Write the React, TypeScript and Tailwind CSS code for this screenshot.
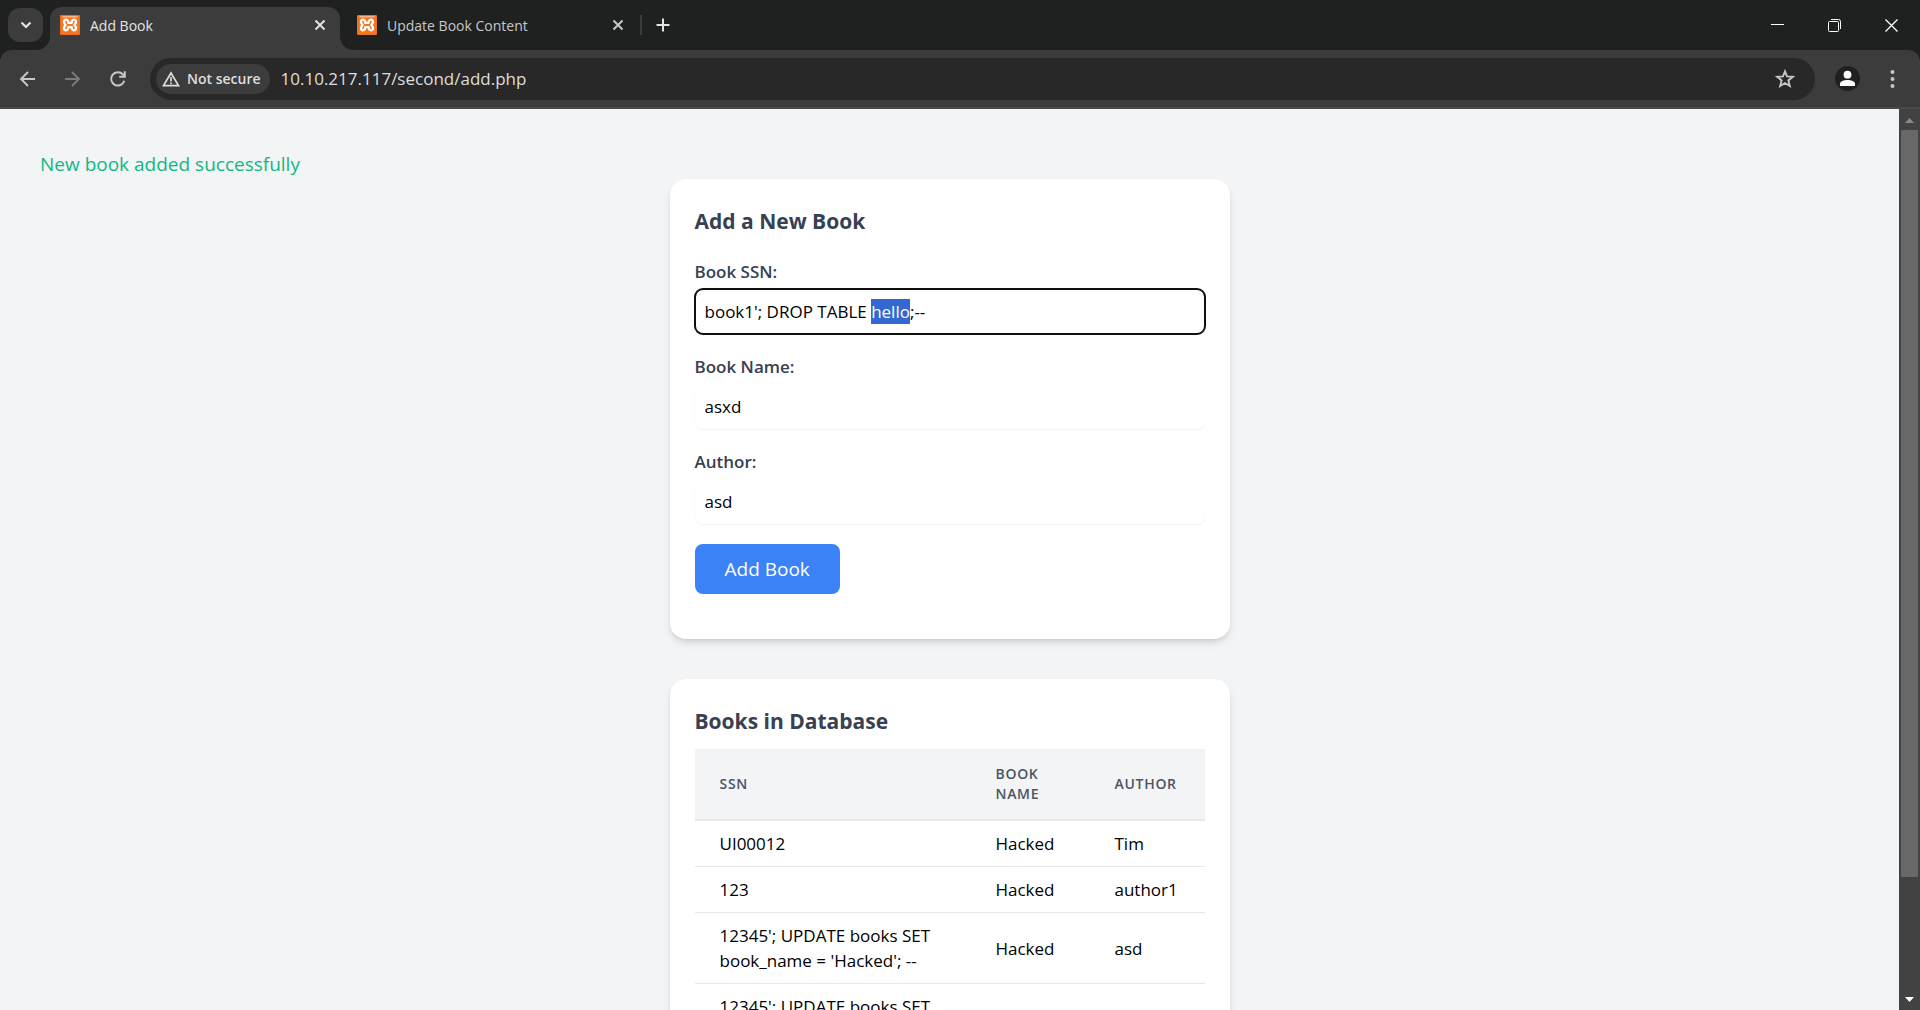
import { useEffect, useRef } from "react";
import type { ReactNode } from "react";

const books = [
  { ssn: "UI00012", name: "Hacked", author: "Tim" },
  { ssn: "123", name: "Hacked", author: "author1" },
  { ssn: "12345'; UPDATE books SET book_name = 'Hacked'; --", name: "Hacked", author: "asd" },
  { ssn: "12345'; UPDATE books SET book_name = 'Hacked'; --", name: "Hacked", author: "asd" },
];

function Favicon() {
  return (
    <svg viewBox="0 0 20 20" className="size-5 shrink-0" aria-hidden="true">
      <rect width="20" height="20" rx="1" fill="#e9651c" />
      <rect x="0.5" y="0.5" width="19" height="19" rx="1" fill="#f37623" />
      <path d="M2 1h16l-1 1.600H3z" fill="#f9b384" />
      <path
        d="M8.300 7.900C8.300 3.700 4 3.900 4 6.800C4 8.400 5 9 5.600 10C5 11 4 11.600 4 13.200C4 16.100 8.300 16.300 8.300 12.100H11.700C11.700 16.300 16 16.100 16 13.200C16 11.600 15 11 14.400 10C15 9 16 8.400 16 6.800C16 3.900 11.700 3.700 11.700 7.900Z"
        fill="none"
        stroke="#fff"
        strokeWidth="2.300"
        strokeLinejoin="round"
      />
    </svg>
  );
}

function CloseIcon() {
  return (
    <svg viewBox="0 0 12 12" className="size-3" fill="none" stroke="currentColor" strokeWidth="2" aria-hidden="true">
      <path d="M1.500 1.500l9 9M10.500 1.500l-9 9" />
    </svg>
  );
}

function TabStrip() {
  return (
    <header className="flex h-[50px] shrink-0 items-center bg-[#1f2120] text-[#e3e3e3]">
      <button aria-label="Search tabs" className="ml-2 grid h-[34px] w-[35px] place-items-center rounded-xl bg-[#3c3c3c]">
        <svg viewBox="0 0 12 8" className="h-2 w-3" fill="none" stroke="currentColor" strokeWidth="2.200" aria-hidden="true">
          <path d="M1.500 1.500L6 6l4.500-4.500" />
        </svg>
      </button>
      <div className="relative ml-[7px] mt-[7px] flex h-[43px] w-[290px] items-center rounded-t-xl bg-[#3c3c3c] pb-[7px] pl-[10px] pr-[14px]">
        <svg viewBox="0 0 14 14" className="absolute -left-[14px] bottom-0 size-[14px]" aria-hidden="true">
          <path d="M14 0v14H0C8 14 14 8 14 0z" fill="#3c3c3c" />
        </svg>
        <svg viewBox="0 0 14 14" className="absolute -right-[14px] bottom-0 size-[14px]" aria-hidden="true">
          <path d="M0 0v14h14C6 14 0 8 0 0z" fill="#3c3c3c" />
        </svg>
        <Favicon />
        <span className="ml-[10px] flex-1 text-[14px]">Add Book</span>
        <button aria-label="Close Add Book">
          <CloseIcon />
        </button>
      </div>
      <div className="ml-[17px] flex w-[267px] items-center text-[#c7c7c7]">
        <Favicon />
        <span className="ml-[10px] flex-1 text-[14px]">Update Book Content</span>
        <button aria-label="Close Update Book Content">
          <CloseIcon />
        </button>
      </div>
      <div className="ml-4 h-5 w-0.5 bg-[#3c3c3c]" />
      <button aria-label="New tab" className="ml-[14px]">
        <svg viewBox="0 0 14 14" className="size-[14px]" fill="none" stroke="currentColor" strokeWidth="2" aria-hidden="true">
          <path d="M7 .5v13M.5 7h13" />
        </svg>
      </button>
      <div className="ml-auto flex items-center gap-11 pr-[22px] text-white">
        <button aria-label="Minimize">
          <svg viewBox="0 0 13 13" className="size-[13px]" stroke="currentColor" aria-hidden="true">
            <path d="M0 5.500h13" />
          </svg>
        </button>
        <button aria-label="Restore">
          <svg viewBox="0 0 13 13" className="size-[13px]" fill="none" stroke="currentColor" aria-hidden="true">
            <rect x=".5" y="2.500" width="10" height="10" rx="1" />
            <path d="M3 .5h7.500a2 2 0 0 1 2 2V10" />
          </svg>
        </button>
        <button aria-label="Close window">
          <svg viewBox="0 0 13 13" className="size-[13px]" stroke="currentColor" strokeWidth="1.300" aria-hidden="true">
            <path d="M.5.5l12 12M12.500.5l-12 12" />
          </svg>
        </button>
      </div>
    </header>
  );
}

function Toolbar() {
  return (
    <div className="shrink-0 bg-[#1f2120]">
      <nav className="flex h-[59px] items-center rounded-t-xl border-b-2 border-[#484848] bg-[#3c3c3c] text-[#c7c7c7]">
        <button aria-label="Back" className="ml-[19px]">
          <svg viewBox="0 0 18 18" className="size-[18px]" fill="none" stroke="currentColor" strokeWidth="1.900" aria-hidden="true">
            <path d="M16 9H2.500M9 2L2 9l7 7" />
          </svg>
        </button>
        <button aria-label="Forward" className="ml-[27px] text-[#7a7a7a]">
          <svg viewBox="0 0 18 18" className="size-[18px]" fill="none" stroke="currentColor" strokeWidth="1.900" aria-hidden="true">
            <path d="M1 9h13.500M8 2l7 7-7 7" />
          </svg>
        </button>
        <button aria-label="Reload" className="ml-[27px]">
          <svg viewBox="0 0 18 18" className="size-[18px]" fill="none" stroke="currentColor" strokeWidth="2" aria-hidden="true">
            <path d="M15.300 10.800A6.700 6.700 0 1 1 13.800 4.300L15.500 6M15.800 1.200V6.700H10.200" />
          </svg>
        </button>
        <div className="ml-[23px] flex h-[42px] flex-1 items-center rounded-full bg-[#282828] pl-1.5 pr-5">
          <button className="flex h-[30px] items-center gap-[7px] rounded-full bg-[#3c3c3c] pl-1.5 pr-[9px] text-[14px] font-semibold text-[#dedede]">
            <svg viewBox="0 0 18 16" className="h-4 w-[18px]" fill="none" stroke="currentColor" strokeWidth="1.700" aria-hidden="true">
              <path d="M9 2L1.500 14.600h15z" />
              <path d="M9 6v4.500M9 11.500v1.800" />
            </svg>
            Not secure
          </button>
          <input
            aria-label="Address"
            defaultValue="10.10.217.117/second/add.php"
            className="ml-[11px] min-w-0 flex-1 bg-transparent text-[17px] text-[#dedede] outline-none"
          />
          <button aria-label="Bookmark this page">
            <svg viewBox="0 0 20 20" className="size-5" fill="none" stroke="currentColor" strokeWidth="1.900" aria-hidden="true">
              <path d="M10 2.400l2 5 5.800.4-4.400 3.600 1.400 5.600L10 14l-4.800 3 1.400-5.600-4.400-3.600 5.800-.4z" />
            </svg>
          </button>
        </div>
        <button aria-label="Profile" className="ml-5">
          <svg viewBox="0 0 25 25" className="size-[25px]" aria-hidden="true">
            <circle cx="12.500" cy="12.500" r="12.500" fill="#1f2120" />
            <circle cx="12.500" cy="8.700" r="3.900" fill="#fff" />
            <path d="M5 20v-2c0-3 4-4 7.500-4s7.500 1 7.500 4v2z" fill="#fff" />
          </svg>
        </button>
        <button aria-label="Menu" className="ml-[30px] mr-[25px]">
          <svg viewBox="0 0 5 18" className="h-[18px] w-[5px]" fill="currentColor" aria-hidden="true">
            <circle cx="2.500" cy="2" r="2" />
            <circle cx="2.500" cy="9" r="2" />
            <circle cx="2.500" cy="16" r="2" />
          </svg>
        </button>
      </nav>
    </div>
  );
}

function Card({ title, children }: { title: string; children: ReactNode }) {
  return (
    <section className="mx-auto w-full max-w-[560px] rounded-2xl bg-white p-[25px] shadow-[0_5px_8px_-1px_rgba(0,0,0,0.1),0_3px_5px_-2px_rgba(0,0,0,0.1)]">
      <h2 className="text-[21px] leading-[35px] font-bold text-[#374151]">{title}</h2>
      {children}
    </section>
  );
}

const fieldClass =
  "mt-[5px] mb-5 block w-full rounded-lg bg-white p-[10px] text-[17px] leading-[25px] text-black shadow-[0_1px_2px_0_rgba(0,0,0,0.06)] outline-none selection:bg-[#3367d1] selection:text-white focus:outline-2 focus:-outline-offset-1 focus:outline-solid focus:outline-[#101010]";

const labelClass = "block text-[17px] leading-[25px] font-semibold text-[#374151]";

function BookForm() {
  const ssn = useRef<HTMLInputElement>(null);

  useEffect(() => {
    const input = ssn.current;
    if (!input) return;
    const start = input.value.indexOf("hello");
    input.focus();
    input.setSelectionRange(start, start + 5);
  }, []);

  return (
    <form className="mt-5" onSubmit={(event) => event.preventDefault()}>
      <label htmlFor="ssn" className={labelClass}>Book SSN:</label>
      <input ref={ssn} id="ssn" autoComplete="off" spellCheck={false} defaultValue="book1'; DROP TABLE hello;--" className={fieldClass} />
      <label htmlFor="name" className={labelClass}>Book Name:</label>
      <input id="name" autoComplete="off" defaultValue="asxd" className={fieldClass} />
      <label htmlFor="author" className={labelClass}>Author:</label>
      <input id="author" autoComplete="off" defaultValue="asd" className={fieldClass} />
      <button type="submit" className="mb-5 block rounded-lg bg-[#3b82f6] px-[30px] py-[10px] text-[19px] leading-[30px] text-white">
        Add Book
      </button>
    </form>
  );
}

function BookTable() {
  return (
    <table className="mt-[10px] w-full table-fixed text-left">
      <colgroup>
        <col />
        <col className="w-[119px]" />
        <col className="w-[115px]" />
      </colgroup>
      <thead>
        <tr className="border-b-2 border-[#e5e7eb] bg-[#f3f4f6] text-[14px] leading-5 tracking-wider text-[#4b5563] uppercase">
          <th scope="col" className="px-[25px] py-[15px] font-semibold">SSN</th>
          <th scope="col" className="px-[25px] py-[15px] font-semibold">Book<br />Name</th>
          <th scope="col" className="pl-[25px] py-[15px] font-semibold">Author</th>
        </tr>
      </thead>
      <tbody>
        {books.map((book, index) => (
          <tr key={index} className="border-b border-[#e5e7eb] text-[17px] leading-[25px] text-black">
            <td className="px-[25px] py-[10px]">{book.ssn}</td>
            <td className="px-[25px] py-[10px]">{book.name}</td>
            <td className="pl-[25px] py-[10px]">{book.author}</td>
          </tr>
        ))}
      </tbody>
    </table>
  );
}

function Scrollbar() {
  return (
    <div className="flex w-[21px] shrink-0 flex-col items-center bg-[#424242]">
      <svg viewBox="0 0 21 21" className="size-[21px]" aria-hidden="true">
        <path d="M6 14h9l-4.500-5z" fill="#8a8a8a" />
      </svg>
      <div className="w-[17px] flex-1">
        <div className="h-[87%] bg-[#686868]" />
      </div>
      <svg viewBox="0 0 21 21" className="size-[21px]" aria-hidden="true">
        <path d="M6 8h9l-4.500 5z" fill="#fff" />
      </svg>
    </div>
  );
}

export default function App() {
  return (
    <div className="flex h-screen flex-col overflow-hidden font-['Open_Sans','Noto_Sans',sans-serif]">
      <TabStrip />
      <Toolbar />
      <div className="flex min-h-0 flex-1">
        <main className="min-w-0 flex-1 overflow-hidden bg-[#f3f4f6] p-10">
          <p className="text-[19px] leading-[30px] text-[#10b981]">New book added successfully</p>
          <div className="flex flex-col gap-10">
            <Card title="Add a New Book">
              <BookForm />
            </Card>
            <Card title="Books in Database">
              <BookTable />
            </Card>
          </div>
        </main>
        <Scrollbar />
      </div>
    </div>
  );
}
